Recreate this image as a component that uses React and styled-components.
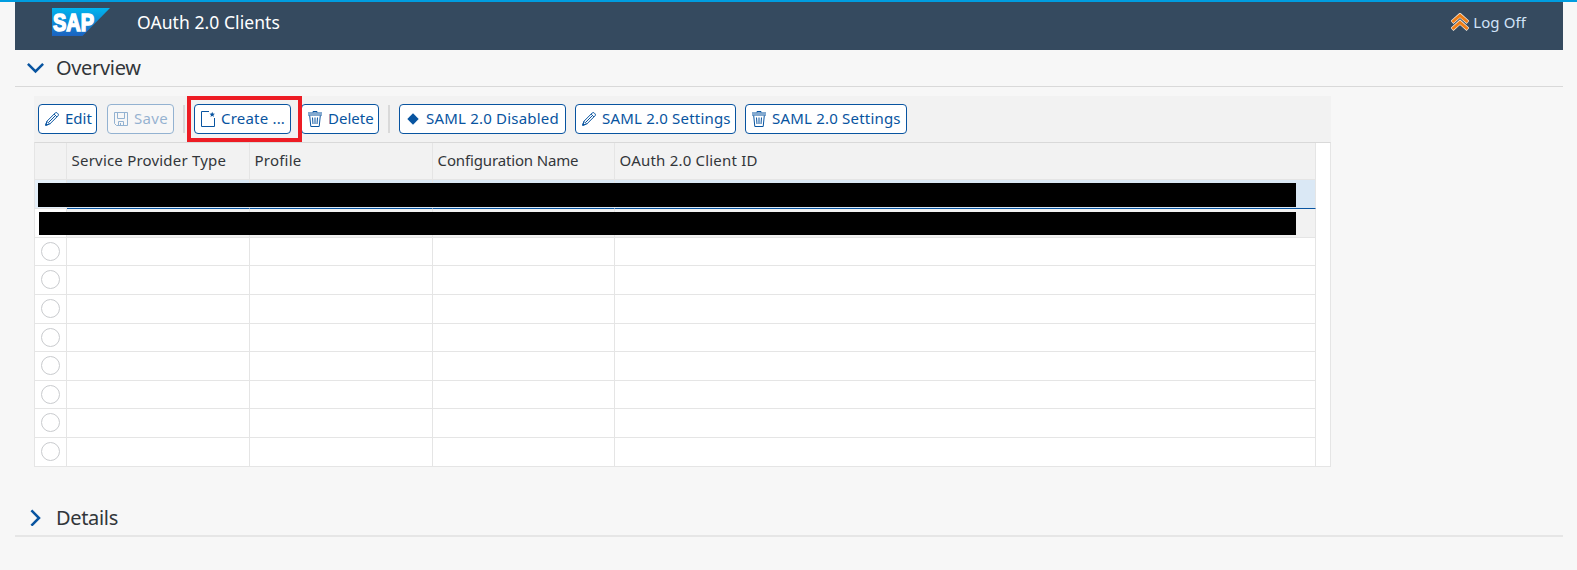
import React from 'react';
import styled, { createGlobalStyle } from 'styled-components';

const Global = createGlobalStyle`
  * { box-sizing: border-box; }
  body { margin: 0; background: #f7f7f7; color: #32363a; font-family: "Noto Sans", sans-serif; }
`;

const Page = styled.div`
  height: 570px;
  overflow: hidden;
  border-top: 2px solid #009de0;
  padding: 0 14px 0 15px;
`;

const Header = styled.header`
  display: flex;
  align-items: flex-start;
  height: 48px;
  padding: 6px 37px 0 37px;
  background: #354a5f;
`;

const Title = styled.h1`
  flex: 1;
  margin: 1px 0 0 27px;
  font-size: 17.5px;
  line-height: 26px;
  font-weight: 400;
  letter-spacing: 0.07px;
  color: #fff;
`;

const LogOff = styled.a`
  display: flex;
  align-items: center;
  gap: 4px;
  height: 26px;
  margin-top: 1px;
  font-size: 15px;
  letter-spacing: 0.1px;
  color: #d1e3f8;
`;

const SectionHead = styled.div`
  display: flex;
  align-items: center;
  gap: 12px;
  width: 1548px;
  height: ${(p) => p.$height}px;
  padding-left: 12px;
  border-bottom: ${(p) => p.$line};
`;

const SectionTitle = styled.h2`
  margin: 0;
  font-size: 20px;
  line-height: 28px;
  font-weight: 400;
  letter-spacing: -0.33px;
`;

const Panel = styled.section`
  width: 1297px;
  margin: 9px 0 0 19px;
`;

const Toolbar = styled.div`
  display: flex;
  align-items: center;
  height: 46px;
  padding-left: 4px;
  background: #f2f2f2;
`;

const Button = styled.button`
  display: flex;
  align-items: center;
  gap: 6px;
  width: ${(p) => p.$width}px;
  height: 30px;
  margin: 0 ${(p) => p.$gap}px 0 0;
  padding: 0 0 0 6px;
  border: 1px solid #0854a0;
  border-radius: 4px;
  background: #fff;
  color: #0854a0;
  font: 450 15px/28px "Noto Sans", sans-serif;
  letter-spacing: ${(p) => p.$tracking ?? 0.2}px;
  white-space: nowrap;
  &:disabled { opacity: 0.4; }
  svg { flex: none; }
`;

const ButtonText = styled.span`
  margin-top: -2px;
`;

const Separator = styled.span`
  width: 2px;
  height: 28px;
  margin-right: ${(p) => p.$gap}px;
  background: #d9d9d9;
`;

const Highlighted = styled.div`
  position: relative;
  &::after {
    content: "";
    position: absolute;
    inset: -8px -1px -8px -7px;
    border: 4px solid #ed1c24;
    z-index: 1;
  }
`;

const TableFrame = styled.div`
  position: relative;
  display: flex;
  border: 1px solid #e5e5e5;
  border-top-color: #d9d9d9;
  border-bottom: 0;
`;

const Grid = styled.div`
  width: 1281px;
`;

const GridRow = styled.div`
  display: grid;
  grid-template-columns: 32px 183px 183px 182px 701px;
  height: ${(p) => p.$height}px;
`;

const Cell = styled.div`
  display: flex;
  align-items: center;
  border-right: 1px solid #e5e5e5;
  border-bottom: 1px solid #e5e5e5;
  background: #fff;
`;

const HeadCell = styled(Cell)`
  padding: 0 0 3px 4.6px;
  background: #f2f2f2;
  font-size: 15px;
  letter-spacing: ${(p) => p.$tracking ?? 0.2}px;
  white-space: nowrap;
`;

const SelectCell = styled(Cell)`
  justify-content: center;
  padding-bottom: 1px;
  background: ${(p) => (p.$selected ? '#e5f0fa' : '#fff')};
`;

const SelectedCell = styled(Cell)`
  background: #dae8f5;
  border-bottom-color: #0854a0;
`;

const AltCell = styled(Cell)`
  background: #f2f2f2;
`;

const Radio = styled.span`
  width: 19px;
  height: 19px;
  border: 1px solid #c9cbce;
  border-radius: 50%;
`;

const ScrollTrack = styled.div`
  flex: 1;
  background: #fff;
  border-bottom: 1px solid #e5e5e5;
`;

const Redaction = styled.div`
  position: absolute;
  top: ${(p) => p.$top}px;
  left: ${(p) => p.$left}px;
  right: 34px;
  height: ${(p) => p.$height}px;
  background: #000;
`;

const Details = styled.section`
  margin-top: 33px;
`;

const Logo = () => (
  <svg width="58" height="28" viewBox="0 0 58 28">
    <defs>
      <linearGradient id="sap" x1="0" y1="0" x2="0" y2="1">
        <stop offset="0" stopColor="#00b4ee" />
        <stop offset="1" stopColor="#1c62c0" />
      </linearGradient>
    </defs>
    <path d="M0 0H58L30.5 28H0Z" fill="url(#sap)" />
    <text x="1" y="22.8" textLength="41" lengthAdjust="spacingAndGlyphs" fontFamily="Liberation Sans, sans-serif" fontWeight="700" fontSize="23" fill="#fff" stroke="#fff" strokeWidth="1.5">SAP</text>
  </svg>
);

const LogOffIcon = () => (
  <svg width="18" height="18" viewBox="0 0 18 18" fill="none" strokeLinejoin="miter">
    <path d="M1 9.4 9 2.2l8 7.2M1 16.4l8-7.2 8 7.2" stroke="#f3e9dd" strokeWidth="4.2" />
    <path d="M1.4 9 9 2.4 16.6 9M1.4 16 9 9.4l7.6 6.6" stroke="#ef7d14" strokeWidth="2.9" />
  </svg>
);

const Chevron = ({ open }) => (
  <svg width="17" height="17" viewBox="0 0 17 17" fill="none" stroke="#0854a0" strokeWidth="2.5">
    <path d={open ? 'M.9 3.9 8.5 11.5 16.1 3.9' : 'M4.4 1.4 12 9 4.4 16.6'} />
  </svg>
);

const Pencil = () => (
  <svg width="14" height="14" viewBox="0 0 14 14" fill="none" stroke="currentColor" strokeWidth="1">
    <path d="M.7 13.3 1.9 9.3 10.3.9Q11-.1 12.3 1.1L13 1.8Q14 2.9 13.1 3.7L4.7 12.1ZM1.9 9.3 4.7 12.1M9.1 2.1l2.8 2.8M3.5 10.5 10.3 3.7" />
    <path d="M.7 13.3 1.2 11.4 2.6 12.8Z" fill="currentColor" />
  </svg>
);

const Disk = () => (
  <svg width="14" height="14" viewBox="0 0 14 14" fill="none" stroke="currentColor" strokeWidth="1">
    <path d="M.5.5H13.5V13.5H2.5L.5 11.5ZM3.5.5V6.5H10.5V.5M4.5 13.5V9.5H9.5V13.5M6.5 11V13.5" />
  </svg>
);

const NewDoc = () => (
  <svg width="14" height="16" viewBox="0 0 14 16" fill="none" stroke="currentColor" strokeWidth="1">
    <path d="M8 .5H.5V15.5H13.5V7" />
    <path d="M11.2 .7 11.9 2.6 13.9 2.8 12.4 4 12.9 5.9 11.2 4.8 9.5 5.9 10 4 8.5 2.8 10.5 2.6Z" fill="currentColor" stroke="none" />
  </svg>
);

const Trash = () => (
  <svg width="14" height="16" viewBox="0 0 14 16" fill="none" stroke="currentColor" strokeWidth="1">
    <path d="M0 2H14M0 4H14M5 1.5V.5H9V1.5M1.7 4.5 2.8 15.5H11.2L12.3 4.5M4.5 6.5 5 13M7 6.5V13M9.5 6.5 9 13" />
  </svg>
);

const Diamond = () => (
  <svg width="14" height="14" viewBox="0 0 14 14">
    <path d="M7 1.3 12.7 7 7 12.7 1.3 7Z" fill="currentColor" />
  </svg>
);

const emptyRows = [28, 29, 29, 28, 29, 28, 29, 29];

export default function App() {
  return (
    <Page>
      <Global />
      <Header>
        <Logo />
        <Title>OAuth 2.0 Clients</Title>
        <LogOff><LogOffIcon />Log Off</LogOff>
      </Header>
      <SectionHead $height={37} $line="1px solid #d9d9d9">
        <Chevron open />
        <SectionTitle>Overview</SectionTitle>
      </SectionHead>
      <Panel>
        <Toolbar>
          <Button $width={59} $gap={10} $tracking={0}><Pencil /><ButtonText>Edit</ButtonText></Button>
          <Button $width={67} $gap={9} $tracking={0.3} disabled><Disk /><ButtonText>Save</ButtonText></Button>
          <Separator $gap={9} />
          <Highlighted>
            <Button $width={97} $gap={10} $tracking={0.2}><NewDoc /><ButtonText>Create ...</ButtonText></Button>
          </Highlighted>
          <Button $width={78} $gap={9} $tracking={0}><Trash /><ButtonText>Delete</ButtonText></Button>
          <Separator $gap={9} />
          <Button $width={167} $gap={9}><Diamond /><ButtonText>SAML 2.0 Disabled</ButtonText></Button>
          <Button $width={161} $gap={9}><Pencil /><ButtonText>SAML 2.0 Settings</ButtonText></Button>
          <Button $width={162} $gap={0}><Trash /><ButtonText>SAML 2.0 Settings</ButtonText></Button>
        </Toolbar>
        <TableFrame>
          <Grid>
            <GridRow $height={37}>
              <HeadCell />
              <HeadCell>Service Provider Type</HeadCell>
              <HeadCell>Profile</HeadCell>
              <HeadCell $tracking={-0.15}>Configuration Name</HeadCell>
              <HeadCell>OAuth 2.0 Client ID</HeadCell>
            </GridRow>
            <GridRow $height={29}>
              <SelectCell $selected />
              <SelectedCell /><SelectedCell /><SelectedCell /><SelectedCell />
            </GridRow>
            <GridRow $height={29}>
              <SelectCell />
              <AltCell /><AltCell /><AltCell /><AltCell />
            </GridRow>
            {emptyRows.map((height, i) => (
              <GridRow key={i} $height={height}>
                <SelectCell><Radio /></SelectCell>
                <Cell /><Cell /><Cell /><Cell />
              </GridRow>
            ))}
          </Grid>
          <ScrollTrack />
          <Redaction $top={40} $left={3} $height={24} />
          <Redaction $top={69} $left={4} $height={23} />
        </TableFrame>
      </Panel>
      <Details>
        <SectionHead $height={37} $line="2px solid #e6e6e6">
          <Chevron />
          <SectionTitle>Details</SectionTitle>
        </SectionHead>
      </Details>
    </Page>
  );
}
